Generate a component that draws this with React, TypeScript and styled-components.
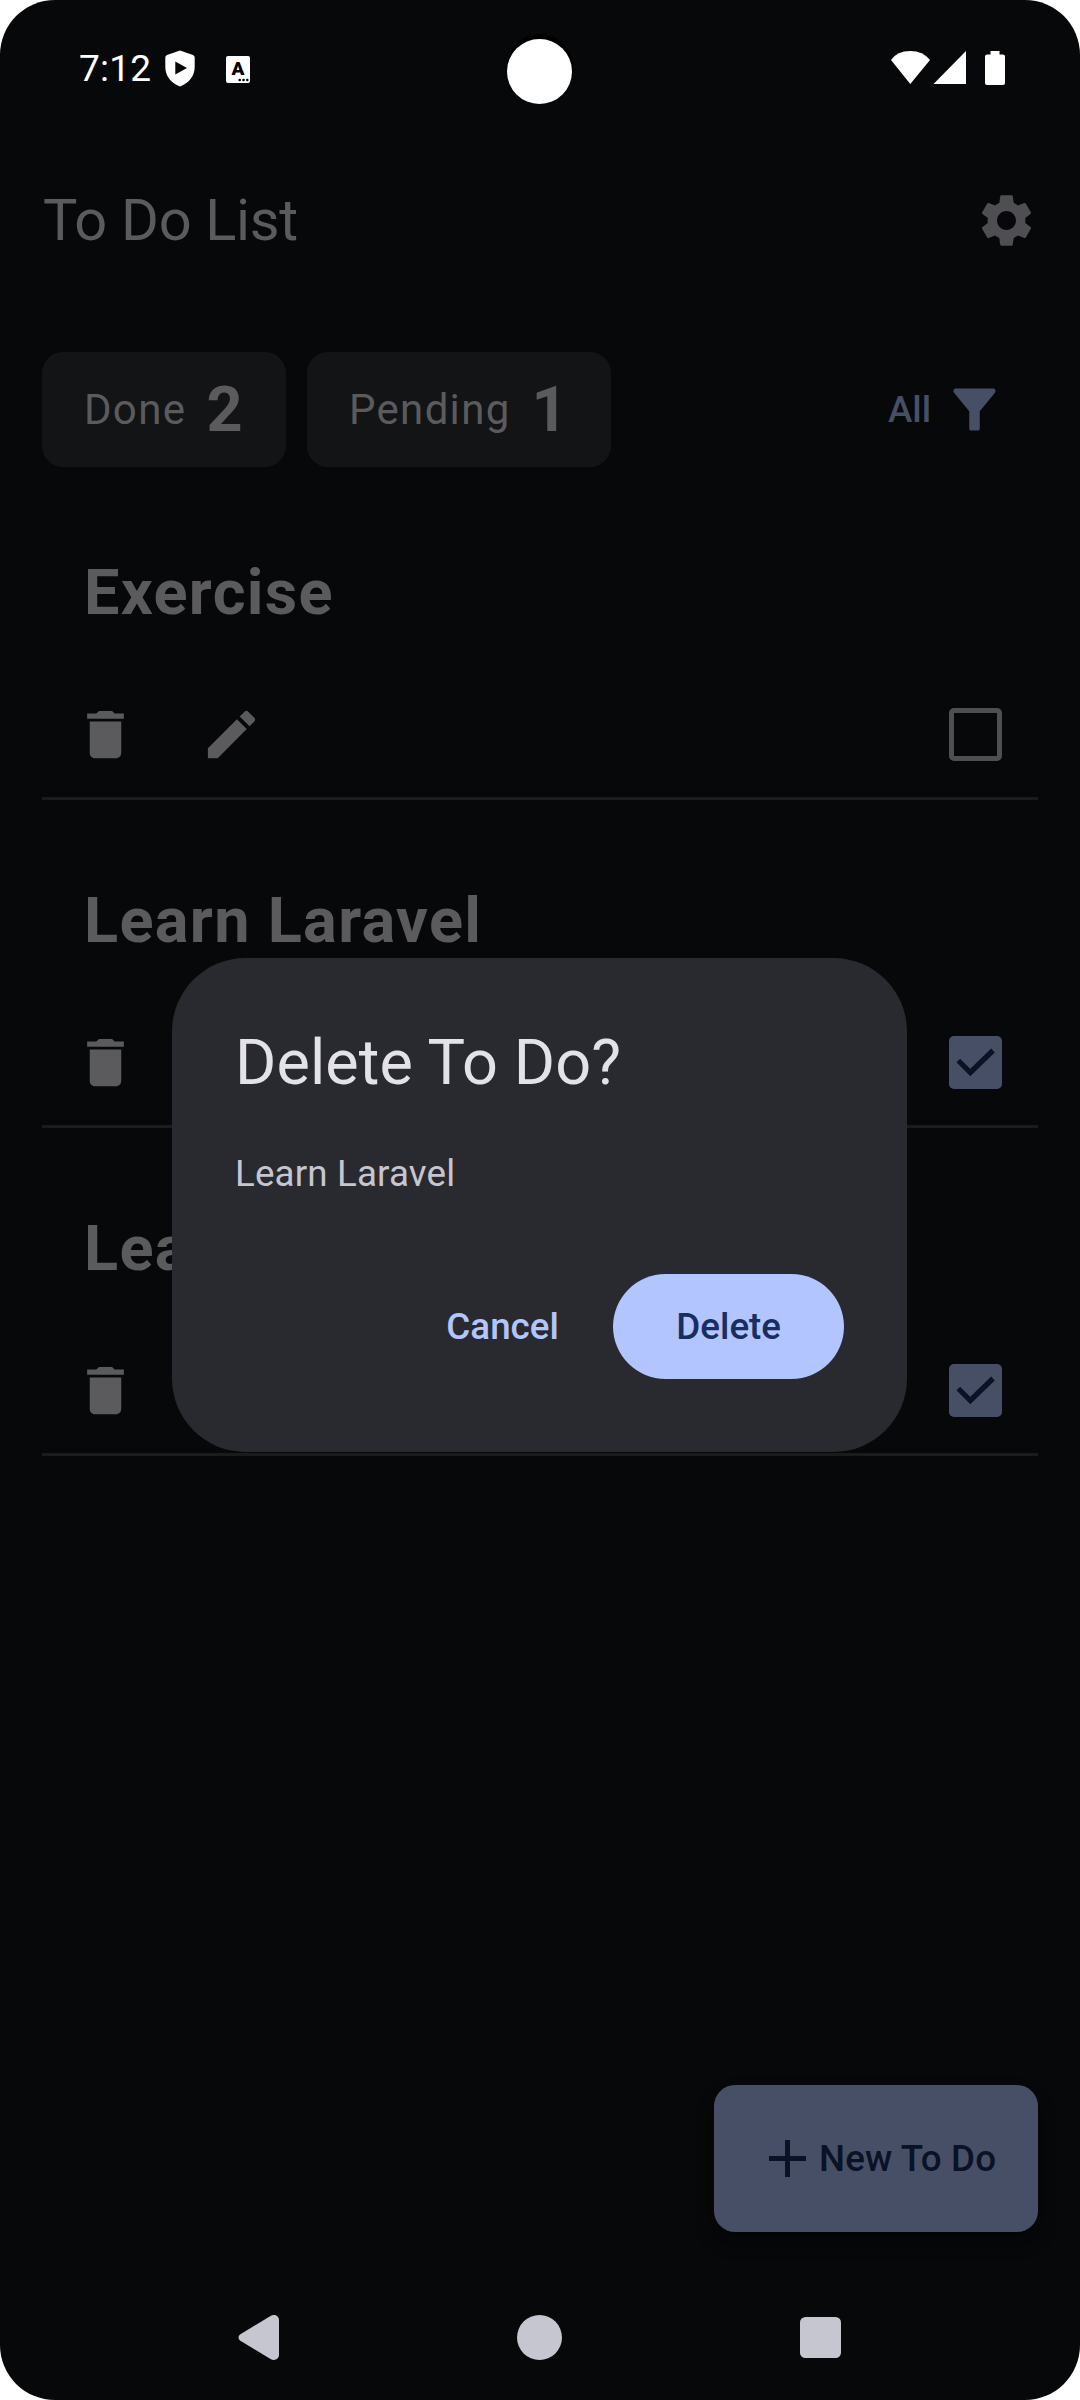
import React from "react";
import styled, { createGlobalStyle } from "styled-components";

const color = {
  background: "#060809",
  text: "#5b5b5d",
  muted: "#4f4f53",
  chip: "#131416",
  divider: "#1b1b1d",
  primaryDim: "#474f66",
  onPrimaryDim: "#0a1226",
  dialog: "#292a2f",
  dialogTitle: "#e3e2e9",
  dialogBody: "#c6c6d0",
  primary: "#b2c5ff",
  onPrimary: "#182e60",
};

const GlobalStyle = createGlobalStyle`
  * { box-sizing: border-box; }
  body { margin: 0; background: #fff; }
  h1, h2, p { margin: 0; }
  button { border: 0; padding: 0; background: none; font: inherit; color: inherit; }
  svg { display: block; flex: none; }
`;

const Screen = styled.div`
  position: relative;
  display: flex;
  flex-direction: column;
  width: 1080px;
  height: 2400px;
  overflow: hidden;
  border-radius: 55px;
  background: ${color.background};
  color: ${color.text};
  font-family: Roboto, "Noto Sans", sans-serif;
`;

const StatusBar = styled.div`
  display: flex;
  align-items: center;
  justify-content: space-between;
  height: 136px;
  padding: 0 75px 0 79px;
  color: #fff;
`;

const StatusGroup = styled.div`
  display: flex;
  align-items: center;
`;

const Clock = styled.span`
  width: 86px;
  padding-top: 1px;
  font-size: 37px;
  line-height: 44px;
  letter-spacing: 0.2px;
`;

const Camera = styled.div`
  position: absolute;
  left: 507px;
  top: 39px;
  width: 65px;
  height: 65px;
  border-radius: 50%;
  background: #fff;
  box-shadow: 0.5px -4.5px 0 0.5px #000;
`;

const AppBar = styled.header`
  display: flex;
  align-items: center;
  justify-content: space-between;
  height: 169px;
  padding: 0 42px 0 43px;
`;

const Title = styled.h1`
  padding-bottom: 2px;
  font-size: 57.75px;
  font-weight: 400;
  line-height: 72px;
  letter-spacing: -0.3px;
`;

const Icon = styled.svg<{ $tone?: string }>`
  width: 63px;
  height: 63px;
  fill: ${(p) => p.$tone ?? color.text};
`;

const FilterBar = styled.div`
  display: flex;
  align-items: center;
  gap: 21px;
  height: 115px;
  margin-top: 47px;
  padding: 0 74px 0 42px;
`;

const Chip = styled.div<{ $width: number }>`
  display: flex;
  align-items: center;
  justify-content: space-between;
  width: ${(p) => p.$width}px;
  height: 115px;
  padding: 0 42px;
  border-radius: 21px;
  background: ${color.chip};
  letter-spacing: 1.31px;
`;

const ChipLabel = styled.span`
  font-size: 42px;
  line-height: 63px;
`;

const ChipCount = styled.strong`
  font-size: 63px;
  font-weight: 700;
  line-height: 63px;
`;

const FilterButton = styled.button`
  display: flex;
  align-items: center;
  gap: 12px;
  margin-left: auto;
  color: ${color.primaryDim};
  font-size: 36.75px;
  font-weight: 500;
  line-height: 52px;
`;

const TodoList = styled.main`
  display: flex;
  flex-direction: column;
  flex: 1;
  margin-top: 5px;
  padding: 0 42px;
`;

const TodoItem = styled.section`
  display: flex;
  flex-direction: column;
  height: 328px;
  padding: 89px 31px 0 32px;
  border-bottom: 3px solid ${color.divider};
`;

const TodoTitle = styled.h2`
  padding-left: 10px;
  font-size: 63px;
  font-weight: 700;
  line-height: 63px;
  letter-spacing: 1.31px;
  white-space: nowrap;
`;

const TodoActions = styled.div`
  display: flex;
  align-items: center;
  gap: 63px;
  margin-top: 79px;
`;

const CheckBox = styled.div<{ $checked: boolean }>`
  display: flex;
  align-items: center;
  justify-content: center;
  width: 53px;
  height: 53px;
  margin: 0 5px 0 auto;
  border: ${(p) => (p.$checked ? "0" : `5px solid ${color.muted}`)};
  border-radius: 5px;
  background: ${(p) => (p.$checked ? color.primaryDim : "transparent")};
`;

const Footer = styled.footer`
  display: flex;
  justify-content: flex-end;
  padding: 0 42px;
`;

const NewButton = styled.button`
  display: flex;
  align-items: center;
  width: 324px;
  height: 147px;
  padding-left: 55px;
  gap: 13px;
  border-radius: 21px;
  background: ${color.primaryDim};
  color: ${color.onPrimaryDim};
  box-shadow: 0 10px 16px rgba(4, 4, 5, 0.5);
  font-size: 36.75px;
  font-weight: 500;
  line-height: 52px;
  letter-spacing: 0.12px;
  white-space: nowrap;
`;

const NavBar = styled.nav`
  display: flex;
  align-items: center;
  justify-content: space-between;
  height: 126px;
  margin-top: 42px;
  padding: 1px 239px 0 238px;
`;

const Overlay = styled.div`
  position: absolute;
  left: 172px;
  top: 958px;
`;

const Dialog = styled.div`
  display: flex;
  flex-direction: column;
  width: 735px;
  height: 494px;
  padding: 63px;
  border-radius: 73.5px;
  background: ${color.dialog};
`;

const DialogTitle = styled.h2`
  color: ${color.dialogTitle};
  font-size: 63px;
  font-weight: 400;
  line-height: 84px;
  letter-spacing: 0.08px;
`;

const DialogText = styled.p`
  margin-top: 42px;
  color: ${color.dialogBody};
  font-size: 36.75px;
  line-height: 53px;
  letter-spacing: 0.15px;
`;

const DialogActions = styled.div`
  display: flex;
  justify-content: flex-end;
  gap: 21px;
  margin-top: 74px;
`;

const DialogButton = styled.button<{ $filled?: boolean }>`
  height: 105px;
  padding: 0 ${(p) => (p.$filled ? 63 : 33.5)}px;
  border-radius: 53px;
  background: ${(p) => (p.$filled ? color.primary : "transparent")};
  color: ${(p) => (p.$filled ? color.onPrimary : color.primary)};
  font-size: 36.75px;
  font-weight: 500;
  line-height: 105px;
`;

const ShieldIcon = () => (
  <svg width="30" height="37" viewBox="0 0 30 37">
    <path
      fill="#fff"
      fillRule="evenodd"
      d="M15 0.5L28 5Q29.7 5.7 29.7 7.5V17C29.7 26 24 33 15 36.5C6 33 0.3 26 0.3 17V7.5Q0.3 5.7 2 5ZM10.3 11.5V24.5L22 18Z"
    />
  </svg>
);

const KeyboardIcon = styled.div`
  position: relative;
  width: 24px;
  height: 27px;
  margin: 2px 0 0 31px;
  border-radius: 2px;
  background: #fff;
  color: #000;
  font-size: 19px;
  font-weight: 900;
  line-height: 26px;
  text-align: center;
`;

const Dots = styled.svg`
  position: absolute;
  right: 1px;
  bottom: 1px;
`;

const StatusIcons = () => (
  <svg width="114" height="36" viewBox="891 50 114 36" fill="#fff">
    <path d="M891 60Q897 51 910.3 51Q923 51 930 60L910.3 84Z" />
    <path d="M966 51V84H933.5Z" />
    <path d="M990.5 51H999.5V54.5H1003Q1005 54.5 1005 56.5V83Q1005 85 1003 85H987Q985 85 985 83V56.5Q985 54.5 987 54.5H990.5Z" />
  </svg>
);

const SettingsIcon = () => (
  <Icon viewBox="0 0 24 24" $tone={color.muted}>
    <path d="M19.14 12.94c.04-.3.06-.61.06-.94 0-.32-.02-.64-.07-.94l2.03-1.58c.18-.14.23-.41.12-.61l-1.92-3.32c-.12-.22-.37-.29-.59-.22l-2.39.96c-.5-.38-1.03-.7-1.62-.94l-.36-2.54c-.04-.24-.24-.41-.48-.41h-3.84c-.24 0-.43.17-.47.41l-.36 2.54c-.59.24-1.13.57-1.62.94l-2.39-.96c-.22-.08-.47 0-.59.22L2.74 8.87c-.12.21-.08.47.12.61l2.03 1.58c-.05.3-.09.63-.09.94s.02.64.07.94l-2.03 1.58c-.18.14-.23.41-.12.61l1.92 3.32c.12.22.37.29.59.22l2.39-.96c.5.38 1.03.7 1.62.94l.36 2.54c.05.24.24.41.48.41h3.84c.24 0 .44-.17.47-.41l.36-2.54c.59-.24 1.13-.56 1.62-.94l2.39.96c.22.08.47 0 .59-.22l1.92-3.32c.12-.22.07-.47-.12-.61l-2.01-1.58zM12 15.6c-1.98 0-3.6-1.62-3.6-3.6s1.62-3.6 3.6-3.6 3.6 1.62 3.6 3.6-1.62 3.6-3.6 3.6z" />
  </Icon>
);

const FunnelIcon = () => (
  <Icon viewBox="0 0 24 24" $tone={color.primaryDim}>
    <path d="M14 12.7V19.3C14 19.75 13.75 20 13.3 20H10.7C10.25 20 10 19.75 10 19.3V12.7L4.2 5.6C3.7 4.95 4.1 4 4.9 4H19.1C19.9 4 20.3 4.95 19.8 5.6Z" />
  </Icon>
);

const DeleteIcon = () => (
  <Icon viewBox="0 0 24 24">
    <path d="M6 19c0 1.1.9 2 2 2h8c1.1 0 2-.9 2-2V7H6v12zM19 4h-3.5l-1-1h-5l-1 1H5v2h14V4z" />
  </Icon>
);

const EditIcon = () => (
  <Icon viewBox="0 0 24 24">
    <path d="M3 17.25V21h3.75L17.81 9.94l-3.75-3.75L3 17.25zM20.71 7.04c.39-.39.39-1.02 0-1.41l-2.34-2.34c-.39-.39-1.02-.39-1.41 0l-1.83 1.83 3.75 3.75 1.83-1.83z" />
  </Icon>
);

const todos = [
  { title: "Exercise", done: false },
  { title: "Learn Laravel", done: true },
  { title: "Learn React", done: true },
];

export default function App() {
  return (
    <Screen>
      <GlobalStyle />
      <StatusBar>
        <StatusGroup>
          <Clock>7:12</Clock>
          <ShieldIcon />
          <KeyboardIcon>
            A
            <Dots width="11" height="4" viewBox="0 0 11 4">
              <circle cx="1.7" cy="2" r="1.3" />
              <circle cx="5.5" cy="2" r="1.3" />
              <circle cx="9.3" cy="2" r="1.3" />
            </Dots>
          </KeyboardIcon>
        </StatusGroup>
        <StatusIcons />
      </StatusBar>
      <AppBar>
        <Title>To Do List</Title>
        <SettingsIcon />
      </AppBar>
      <FilterBar>
        <Chip $width={244}>
          <ChipLabel>Done</ChipLabel>
          <ChipCount>2</ChipCount>
        </Chip>
        <Chip $width={304}>
          <ChipLabel>Pending</ChipLabel>
          <ChipCount>1</ChipCount>
        </Chip>
        <FilterButton>
          All
          <FunnelIcon />
        </FilterButton>
      </FilterBar>
      <TodoList>
        {todos.map((todo) => (
          <TodoItem key={todo.title}>
            <TodoTitle>{todo.title}</TodoTitle>
            <TodoActions>
              <DeleteIcon />
              {!todo.done && <EditIcon />}
              <CheckBox $checked={todo.done}>
                {todo.done && (
                  <svg width="53" height="53" viewBox="0 0 53 53">
                    <path
                      d="M9.3 24.5L21.3 36.5L44 14.5"
                      fill="none"
                      stroke={color.onPrimaryDim}
                      strokeWidth="5.25"
                    />
                  </svg>
                )}
              </CheckBox>
            </TodoActions>
          </TodoItem>
        ))}
      </TodoList>
      <Footer>
        <NewButton>
          <svg width="37" height="37" viewBox="0 0 37 37">
            <path d="M18.5 0V37M0 18.5H37" stroke="currentColor" strokeWidth="5" />
          </svg>
          New To Do
        </NewButton>
      </Footer>
      <NavBar>
        <svg width="41" height="45" viewBox="0 0 41 45" fill={color.dialogBody}>
          <path d="M2 19.5L32.5 0.9C36.5 -1.3 41 1 41 5V40C41 44 36.5 46.3 32.5 44.1L2 25.5C0 24 0 21 2 19.5Z" />
        </svg>
        <svg width="45" height="45" viewBox="0 0 45 45" fill={color.dialogBody}>
          <circle cx="22.5" cy="22.5" r="22.5" />
        </svg>
        <svg width="41" height="41" viewBox="0 0 41 41" fill={color.dialogBody}>
          <rect width="41" height="41" rx="5.5" />
        </svg>
      </NavBar>
      <Camera />
      <Overlay>
        <Dialog role="dialog">
          <DialogTitle>Delete To Do?</DialogTitle>
          <DialogText>Learn Laravel</DialogText>
          <DialogActions>
            <DialogButton>Cancel</DialogButton>
            <DialogButton $filled>Delete</DialogButton>
          </DialogActions>
        </Dialog>
      </Overlay>
    </Screen>
  );
}
